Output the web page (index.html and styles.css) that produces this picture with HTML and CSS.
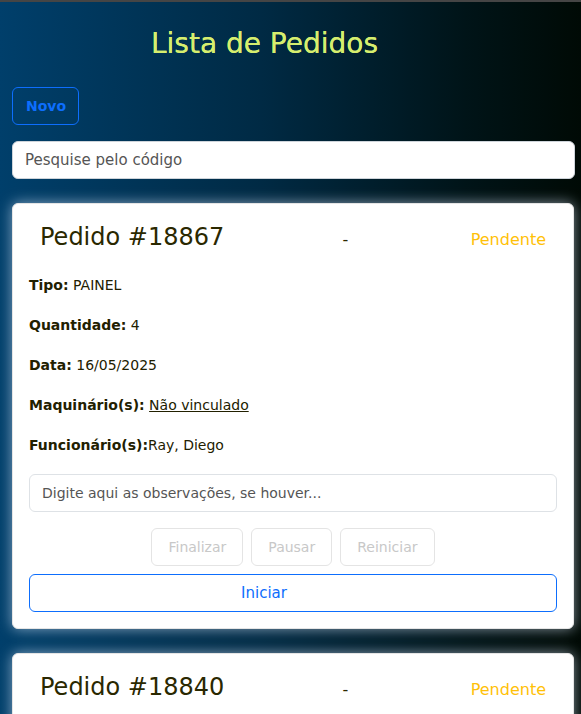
FILE: index.html
```html
<!DOCTYPE html>
<html lang="pt-BR">
<head>
<meta charset="utf-8">
<title>Lista de Pedidos</title>
<link rel="stylesheet" href="styles.css">
</head>
<body>
<div class="page">
  <h1 class="title">Lista de Pedidos</h1>
  <div class="toolbar"><button class="btn-novo">Novo</button></div>
  <input class="search" type="text" placeholder="Pesquise pelo código">

  <div class="card">
    <div class="card-head">
      <span class="pedido">Pedido #18867</span>
      <span class="dash">-</span>
      <span class="status">Pendente</span>
    </div>
    <p class="field"><b>Tipo:</b> PAINEL</p>
    <p class="field"><b>Quantidade:</b> 4</p>
    <p class="field"><b>Data:</b> 16/05/2025</p>
    <p class="field"><b>Maquinário(s):</b> <u>Não vinculado</u></p>
    <p class="field"><b>Funcionário(s):</b>Ray, Diego</p>
    <input class="obs" type="text" placeholder="Digite aqui as observações, se houver...">
    <div class="actions">
      <button class="btn-off">Finalizar</button>
      <button class="btn-off">Pausar</button>
      <button class="btn-off">Reiniciar</button>
    </div>
    <button class="btn-iniciar">Iniciar</button>
  </div>

  <div class="card">
    <div class="card-head">
      <span class="pedido">Pedido #18840</span>
      <span class="dash">-</span>
      <span class="status">Pendente</span>
    </div>
    <p class="field"><b>Tipo:</b> PAINEL</p>
    <p class="field"><b>Quantidade:</b> 2</p>
  </div>
</div>
</body>
</html>
```

FILE: styles.css
```css
html, body {
  margin: 0;
  height: 100%;
}
body {
  border-top: 2px solid #454545;
  box-sizing: border-box;
  background: linear-gradient(90deg, #003f6b 0%, #002a44 45%, #001418 80%, #000a05 100%);
  font-family: "DejaVu Sans", sans-serif;
  overflow: hidden;
}
.page {
  padding: 0 6px 0 12px;
}
.title {
  margin: 0;
  padding: 22px 58px 0 0;
  text-align: center;
  font-size: 28px;
  font-weight: 400;
  line-height: 40px;
  color: #d6ee6e;
  text-shadow: 0 0 0.5px #d6ee6e;
}
.toolbar {
  margin-top: 23px;
}
.btn-novo {
  height: 38px;
  padding: 0 12px 0 13px;
  border: 1px solid #0d6efd;
  border-radius: 6px;
  background: transparent;
  color: #0d6efd;
  font-family: inherit;
  font-size: 14px;
  font-weight: 600;
}
.search {
  display: block;
  box-sizing: border-box;
  width: 100%;
  height: 38px;
  margin-top: 16px;
  padding: 0 12px;
  border: 1px solid #ced4da;
  border-radius: 6px;
  background: #fff;
  font-family: inherit;
  font-size: 15px;
}
.search::placeholder { color: #555; }
.card {
  margin-top: 24px;
  margin-right: 1px;
  padding: 13px 16px 16px;
  background: #fff;
  border: 1px solid #e5e5e5;
  border-radius: 6px;
  box-shadow: 0 0 14px rgba(220, 235, 255, 0.6);
}
.card-head {
  display: flex;
  justify-content: space-between;
  align-items: baseline;
  padding: 0 11px 0 11px;
  margin-top: 3px;
  height: 34px;
  line-height: 34px;
  color: #2a2800;
}
.pedido {
  font-size: 24px;
}
.dash {
  font-size: 16px;
  padding-right: 4px;
}
.status {
  font-size: 16px;
  color: #ffc107;
}
.field {
  margin: 0;
  height: 40px;
  line-height: 40px;
  font-size: 14px;
  color: #222000;
}
.field:first-of-type { margin-top: 11px; }
.field b { font-weight: 700; }
.obs {
  display: block;
  box-sizing: border-box;
  width: 100%;
  height: 38px;
  margin-top: 9px;
  padding: 0 12px;
  border: 1px solid #dee2e6;
  border-radius: 6px;
  font-family: inherit;
  font-size: 14px;
}
.obs::placeholder { color: #555; }
.actions {
  display: flex;
  justify-content: center;
  gap: 8px;
  margin-top: 16px;
}
.btn-off {
  height: 38px;
  padding: 0 16px;
  border: 1px solid #e4e4e4;
  border-radius: 6px;
  background: #fff;
  color: #c8c8c8;
  font-family: inherit;
  font-size: 14px;
}
.btn-iniciar {
  display: block;
  width: 100%;
  height: 38px;
  margin-top: 8px;
  padding: 0 58px 0 0;
  border: 1px solid #0d6efd;
  border-radius: 6px;
  background: #fff;
  color: #0d6efd;
  font-family: inherit;
  font-size: 15px;
}
```
